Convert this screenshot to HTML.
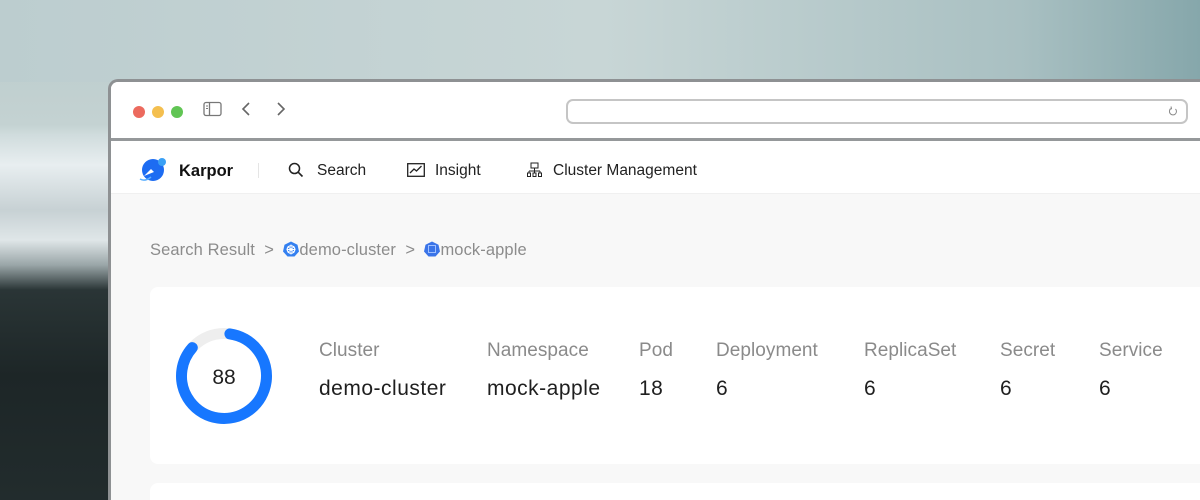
<!DOCTYPE html>
<html><head><meta charset="utf-8"><style>
*{margin:0;padding:0;box-sizing:border-box}
html,body{width:1200px;height:500px;overflow:hidden}
body{position:relative;font-family:"Liberation Sans",sans-serif;background:#1e2829}
.bgl{position:absolute;left:0;top:0;width:120px;height:500px;
background:linear-gradient(180deg,#b8caca 0%,#c4d2d2 25%,#d0dcdd 27%,#e8eef0 33%,#c7d1d4 42%,#dfe6e8 48%,#9aa6a8 53%,#2a3536 58%,#1d2627 75%,#222c2d 100%)}
.sky{position:absolute;left:0;top:0;width:1200px;height:82px;background:linear-gradient(90deg,#bccdcf 0%,#c8d6d6 50%,#a9c0c2 85%,#86a7ab 100%)}
.win{position:absolute;left:108px;top:79px;width:1100px;height:440px;border:3px solid #8e9193;border-bottom:none;border-radius:10px 0 0 0;background:#f8f8f8;overflow:hidden}
.tb{height:59px;background:#fff;border-bottom:3px solid #95989a;position:relative}
.dot{position:absolute;top:24px;width:12px;height:12px;border-radius:50%}
.url{position:absolute;left:455px;top:17px;width:622px;height:25px;border:2.5px solid #c5c5c5;border-radius:7px}
.nav{height:53px;background:#fff;border-bottom:1px solid #f0f0f0;position:relative;font-size:15.5px;color:#222}
.nav span{position:absolute;top:21px}
.bc{position:absolute;top:159px;left:39px;font-size:16.5px;color:#8c8c8c;letter-spacing:0.1px}
.card{position:absolute;left:39px;top:205px;width:1080px;height:177px;background:#fff;border-radius:8px}
.card2{position:absolute;left:39px;top:401px;width:1080px;height:60px;background:#fff;border-radius:8px}
.l{position:absolute;top:53px;font-size:19px;color:#8a8a8a;letter-spacing:0.05px}
.v{position:absolute;top:90px;font-size:21px;color:#1f1f1f;letter-spacing:0.5px}
</style></head><body>
<div class="bgl"></div>
<div class="sky"></div>
<div class="win">
 <div class="tb">
  <div class="dot" style="left:22px;background:#ec6a5e"></div>
  <div class="dot" style="left:41px;background:#f4bf4f"></div>
  <div class="dot" style="left:60px;background:#61c554"></div>
  <svg style="position:absolute;left:92px;top:19px" width="20" height="16"><rect x="1" y="1.5" width="17" height="13" rx="2" fill="none" stroke="#777" stroke-width="1.3"/><line x1="6.5" y1="2" x2="6.5" y2="14" stroke="#777" stroke-width="1.3"/><line x1="3" y1="5" x2="5" y2="5" stroke="#777"/><line x1="3" y1="7.5" x2="5" y2="7.5" stroke="#777"/></svg>
  <svg style="position:absolute;left:129px;top:19px" width="12" height="16"><path d="M9 2 L3 8 L9 14" fill="none" stroke="#666" stroke-width="1.6"/></svg>
  <svg style="position:absolute;left:164px;top:19px" width="12" height="16"><path d="M3 2 L9 8 L3 14" fill="none" stroke="#666" stroke-width="1.6"/></svg>
  <div class="url"><svg style="position:absolute;right:8px;top:4px" width="10" height="13"><path d="M7.5 4 A3.5 3.5 0 1 1 3 3.5" fill="none" stroke="#888" stroke-width="1"/><path d="M3 1.5 L3.5 3.8 L1.5 4.3" fill="none" stroke="#888" stroke-width="1"/></svg></div>
 </div>
 <div class="nav">
  <svg style="position:absolute;left:26px;top:15px" width="32" height="28"><circle cx="16" cy="14" r="11" fill="#1d6cf2"/><circle cx="25" cy="6" r="4" fill="#3aa0f5"/><path d="M7 20 L14 13 L17 16 Z" fill="#fff"/><path d="M3 23 Q8 26 14 21" fill="none" stroke="#5cb0ff" stroke-width="1.5"/></svg>
  <span style="left:68px;font-weight:bold;font-size:16.5px;color:#111">Karpor</span>
  <div style="position:absolute;left:147px;top:22px;width:1px;height:15px;background:#e5e5e5"></div>
  <svg style="position:absolute;left:177px;top:21px" width="16" height="16"><circle cx="6.5" cy="6.5" r="5" fill="none" stroke="#222" stroke-width="1.5"/><line x1="10.3" y1="10.3" x2="14.5" y2="14.5" stroke="#222" stroke-width="1.6"/></svg>
  <span style="left:206px">Search</span>
  <svg style="position:absolute;left:296px;top:22px" width="18" height="14"><rect x="0.7" y="0.7" width="16.6" height="12.6" fill="none" stroke="#222" stroke-width="1.3"/><path d="M3 10 L7 6 L9.5 8 L14.5 3" fill="none" stroke="#222" stroke-width="1.3"/></svg>
  <span style="left:324px">Insight</span>
  <svg style="position:absolute;left:416px;top:21px" width="15" height="16"><rect x="4" y="1" width="7" height="5" fill="none" stroke="#222"/><path d="M7.5 6v3M2 9h11M2 9v2M7.5 9v2M13 9v2" fill="none" stroke="#222"/><rect x="0.5" y="11" width="3" height="3.5" fill="none" stroke="#222"/><rect x="6" y="11" width="3" height="3.5" fill="none" stroke="#222"/><rect x="11.5" y="11" width="3" height="3.5" fill="none" stroke="#222"/></svg>
  <span style="left:442px">Cluster Management</span>
 </div>
 <div class="bc">Search Result &nbsp;&gt;&nbsp; <svg width="16" height="16" style="vertical-align:-2px"><polygon points="8,0.5 14.5,3.7 16,10.5 11.5,15.5 4.5,15.5 0,10.5 1.5,3.7" fill="#3480f0"/><circle cx="8" cy="8.5" r="3.8" fill="none" stroke="#fff" stroke-width="1.2"/><path d="M8 3.5v10M3.5 8.5h9M4.8 5.3l6.4 6.4M11.2 5.3l-6.4 6.4" stroke="#fff" stroke-width="0.9"/></svg>demo-cluster &nbsp;&gt;&nbsp; <svg width="16" height="16" style="vertical-align:-2px"><polygon points="8,0.5 14.5,3.7 16,10.5 11.5,15.5 4.5,15.5 0,10.5 1.5,3.7" fill="#3a74e8"/><rect x="4.5" y="4.5" width="7" height="7" fill="none" stroke="#9fc0ff" stroke-width="1"/></svg>mock-apple</div>
 <div class="card">
  <svg style="position:absolute;left:24px;top:39px" width="100" height="100" viewBox="0 0 100 100">
   <circle cx="50" cy="50" r="42.5" fill="none" stroke="#eeeeee" stroke-width="11"/>
   <circle cx="50" cy="50" r="42.5" fill="none" stroke="#1777ff" stroke-width="11" stroke-linecap="round" stroke-dasharray="225 267" transform="rotate(-82 50 50)"/>
   <text x="50" y="58" text-anchor="middle" font-family="Liberation Sans" font-size="21" fill="#1f1f1f">88</text>
  </svg>
  <div class="l" style="left:169px">Cluster</div><div class="v" style="left:169px">demo-cluster</div>
  <div class="l" style="left:337px">Namespace</div><div class="v" style="left:337px">mock-apple</div>
  <div class="l" style="left:489px">Pod</div><div class="v" style="left:489px">18</div>
  <div class="l" style="left:566px">Deployment</div><div class="v" style="left:566px">6</div>
  <div class="l" style="left:714px">ReplicaSet</div><div class="v" style="left:714px">6</div>
  <div class="l" style="left:850px">Secret</div><div class="v" style="left:850px">6</div>
  <div class="l" style="left:949px">Service</div><div class="v" style="left:949px">6</div>
 </div>
 <div class="card2"></div>
</div>
</body></html>
